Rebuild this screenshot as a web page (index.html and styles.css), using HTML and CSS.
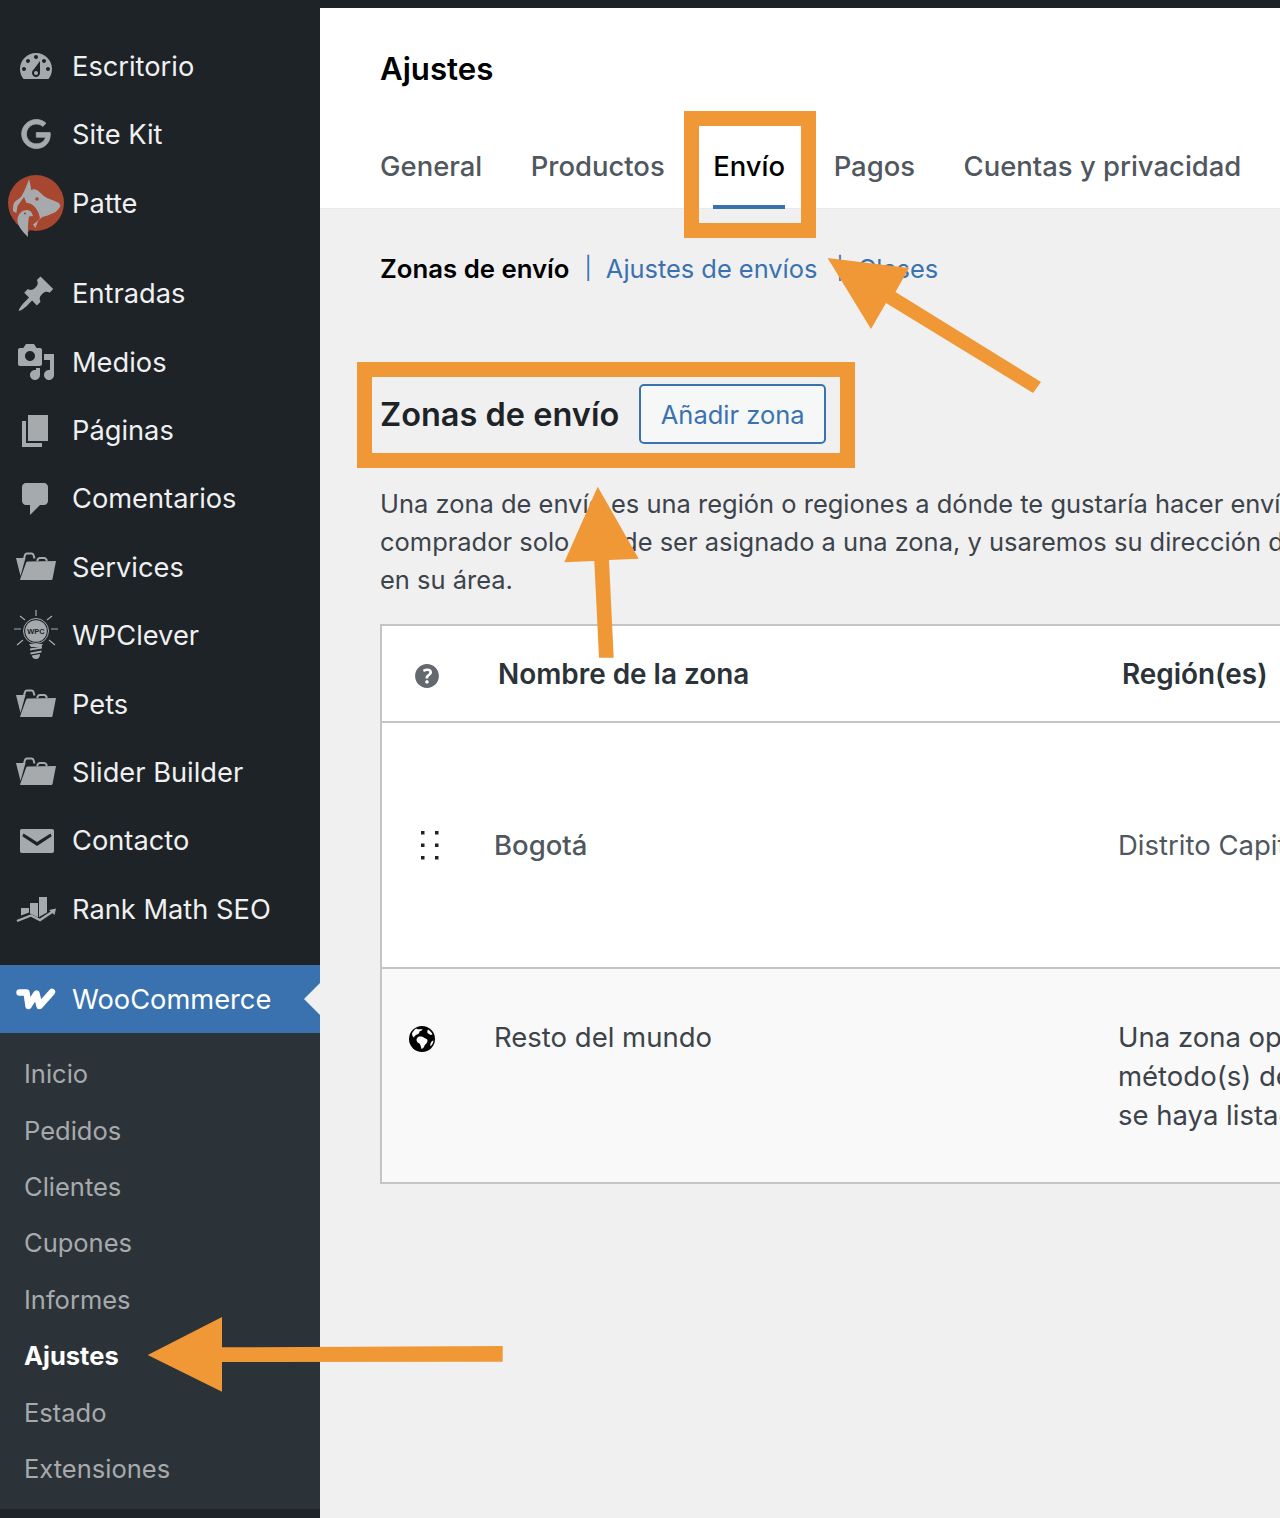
FILE: index.html
```html
<!DOCTYPE html>
<html lang="es">
<head>
<meta charset="utf-8">
<title>Ajustes de envío</title>
<link rel="stylesheet" href="styles.css">
</head>
<body>
<div class="app">
  <nav class="sidebar">
    <ul class="menu">
      <li class="item"><svg class="ico" viewBox="0 0 20 20"><path d="M3.76 16h12.48c1.1-1.37 1.76-3.11 1.76-5 0-4.42-3.58-8-8-8s-8 3.58-8 8c0 1.89.66 3.63 1.76 5zM10 4c.55 0 1 .45 1 1s-.45 1-1 1-1-.45-1-1 .45-1 1-1zM6 6c.55 0 1 .45 1 1s-.45 1-1 1-1-.45-1-1 .45-1 1-1zm8 0c.55 0 1 .45 1 1s-.45 1-1 1-1-.45-1-1 .45-1 1-1zm-5.37 5.55L12 7v6c0 1.1-.9 2-2 2s-2-.9-2-2c0-.57.24-1.08.63-1.45zM4 10c.55 0 1 .45 1 1s-.45 1-1 1-1-.45-1-1 .45-1 1-1zm12 0c.55 0 1 .45 1 1s-.45 1-1 1-1-.45-1-1 .45-1 1-1zm-5 3c0-.55-.45-1-1-1s-1 .45-1 1 .45 1 1 1 1-.45 1-1z" fill-rule="evenodd"/></svg><span>Escritorio</span></li>
      <li class="item"><svg class="ico" viewBox="0 0 40 40"><path class="stroked" d="M20.3 17.6v4.6h9.2c-.4 2.4-2.9 6.6-9.2 6.6-5.5 0-9.9-4.5-9.9-9.9s4.4-9.9 9.9-9.9c3.1 0 5.2 1.3 6.4 2.5l3.3-3.2C27.7 6 24.4 4.5 20.3 4.5 12.2 4.5 5.7 11 5.7 19s6.500 14.500 14.600 14.500c8.400 0 14-5.900 14-14.200 0-.7-.1-1.200-.2-1.700H20.300z"/></svg><span>Site Kit</span></li>
      <li class="item item-avatar"><svg class="avatar" viewBox="0 0 56 62"><circle cx="28" cy="28" r="28" fill="#a8472f"/><path fill="#a7aaad" d="M21 4c1 4 2 8 2 11 2-1 4-1 6 0 3 2 6 6 10 8 4 2 9 3 12 5l1.500 3c-2 3-4 6-7 7-4 2-8 3-11 4l-4 3c-1 2-2 5-3 8l-6-8L8 38l-3-2c0-3 0-6 1-8 2-3 5-4 7-6 3-5 6-12 8-18z"/><path fill="#a8472f" d="M8 40l1.500-9c2-3 4.500-6 6.500-9l2.500 6c2 0 4 .5 6 2 3 2 6 6 7.500 13l-2.500 3-5 4-4 7-13-9z"/><path fill="#a7aaad" d="M9.500 45c0-6 4.500-10 9.500-10 3 0 5 2 6 6l-4 .5c-1 5-1.200 13-1 20.500C14 56 9.500 51 9.500 45z"/><circle cx="29" cy="24" r="1.800" fill="#a8472f"/><circle cx="17" cy="38.500" r="1.100" fill="#a8472f"/></svg><span>Patte</span></li>
      <li class="item item-after-avatar"><svg class="ico" viewBox="0 0 20 20"><path d="M10.440 3.020l1.820-1.820 6.360 6.350-1.830 1.820c-1.050-.68-2.480-.57-3.410.36l-.75.75c-.92.93-1.040 2.350-.35 3.410l-1.830 1.820-2.410-2.410-2.800 2.790c-.42.42-3.380 2.710-3.800 2.290s1.860-3.390 2.280-3.810l2.790-2.790L4.100 9.360l1.830-1.820c1.050.69 2.480.57 3.400-.36l.75-.75c.93-.92 1.050-2.350.36-3.410z"/></svg><span>Entradas</span></li>
      <li class="item"><svg class="ico" viewBox="0 0 20 20"><path fill-rule="evenodd" d="M13 11V4c0-.55-.45-1-1-1h-1.670L9 1H5L3.670 3H2c-.55 0-1 .45-1 1v7c0 .55.45 1 1 1h10c.55 0 1-.45 1-1zM7 4.500c1.380 0 2.500 1.120 2.500 2.500S8.380 9.500 7 9.500 4.500 8.380 4.500 7 5.620 4.500 7 4.500zM14 6h5v10.500c0 1.380-1.120 2.500-2.500 2.500S14 17.880 14 16.500s1.120-2.500 2.500-2.500c.17 0 .34.02.5.05V9h-3V6zm-4 8.050V13h2v3.500c0 1.380-1.120 2.500-2.500 2.500S7 17.880 7 16.500 8.120 14 9.500 14c.17 0 .34.02.5.05z"/></svg><span>Medios</span></li>
      <li class="item"><svg class="ico" viewBox="0 0 20 20"><path d="M6 15V2h10v13H6zm-1 1h8v2H3V5h2v11z"/></svg><span>Páginas</span></li>
      <li class="item"><svg class="ico" viewBox="0 0 20 20"><path d="M5 2h9c1.100 0 2 .9 2 2v7c0 1.100-.9 2-2 2h-2l-5 5v-5H5c-1.100 0-2-.9-2-2V4c0-1.100.9-2 2-2z"/></svg><span>Comentarios</span></li>
      <li class="item"><svg class="ico" viewBox="0 0 40 40"><use href="#folder"/></svg><span>Services</span></li>
      <li class="item"><svg class="ico" viewBox="0 0 40 40"><path class="rays" d="M20 -6v6M4 0l5 4M36 0l-5 4M-2 13h7M35 13h7M1 29l6-5M39 29l-6-5"/><circle cx="20" cy="15" r="12.500" fill="none" stroke="#a7aaad" stroke-width="1"/><circle cx="20" cy="15" r="10.800"/><text x="20" y="18" class="wpc">WPC</text><path d="M13 28h14l-2 3H15zM14 32.500l12-2v2l-12 2zM14.500 36.500l11-2v2l-11 2zM16 39.500l8-1.500c0 3-1.500 5-4 5s-4-1.500-4-3.500z"/></svg><span>WPClever</span></li>
      <li class="item"><svg class="ico" viewBox="0 0 40 40"><use href="#folder"/></svg><span>Pets</span></li>
      <li class="item"><svg class="ico" viewBox="0 0 40 40"><use href="#folder"/></svg><span>Slider Builder</span></li>
      <li class="item"><svg class="ico" viewBox="0 0 40 40"><path fill-rule="evenodd" d="M6 8h30c1.500 0 2 .8 2 2v20c0 1.200-.6 2-2 2H6c-1.400 0-2-.8-2-2V10c0-1.200.5-2 2-2zm1.500 4.500l-1.200 2.800L21 25l14.700-9.700-1.200-2.800L21 21z"/></svg><span>Contacto</span></li>
      <li class="item"><svg class="ico" viewBox="0 0 40 40"><path d="M5 19h8v4.500L5 26.500zM14 14h8v14.500L14 24.500zM23 8h8v15.500L23 28z"/><path class="line" d="M1 32L15 26.500 24 31 36 23"/><path d="M33 21l7-1.500-1.500 6.500z"/></svg><span>Rank Math SEO</span></li>
      <li class="item item-woo"><svg class="ico" viewBox="0 0 40 22"><path class="woo" d="M3.500 4.500H10.500L12.500 18 20.500 5.500 23.500 18 36 4"/></svg><span>WooCommerce</span></li>
    </ul>
    <ul class="submenu">
      <li>Inicio</li>
      <li>Pedidos</li>
      <li>Clientes</li>
      <li>Cupones</li>
      <li>Informes</li>
      <li class="current">Ajustes</li>
      <li>Estado</li>
      <li>Extensiones</li>
    </ul>
  </nav>
  <main class="main">
    <header class="head">
      <h1>Ajustes</h1>
      <div class="tabs">
        <a>General</a>
        <a>Productos</a>
        <a class="active">Envío</a>
        <a>Pagos</a>
        <a>Cuentas y privacidad</a>
      </div>
    </header>
    <div class="body">
      <div class="sublinks"><strong>Zonas de envío</strong><span class="sep">|</span><a>Ajustes de envíos</a><span class="sep">|</span><a>Clases</a></div>
      <div class="title-row">
        <h2>Zonas de envío</h2>
        <button class="btn">Añadir zona</button>
      </div>
      <p class="intro">Una zona de envío es una región o regiones a dónde te gustaría hacer envíos. Un<br>comprador solo puede ser asignado a una zona, y usaremos su dirección de envío<br>en su área.</p>
      <div class="table">
        <div class="row row-head">
          <div class="c1"><svg class="help" viewBox="0 0 20 20"><circle cx="10" cy="10" r="7" fill="#fff"/><path fill-rule="evenodd" d="M17 10c0-3.870-3.140-7-7-7-3.870 0-7 3.130-7 7s3.130 7 7 7c3.860 0 7-3.130 7-7zm-6.300 1.480H9.140v-.43c0-.38.08-.7.24-.98s.46-.57.88-.89c.41-.29.68-.53.81-.71.14-.18.2-.39.2-.62 0-.25-.09-.44-.28-.58-.19-.13-.45-.19-.79-.19-.58 0-1.250.19-2 .57l-.64-1.280c.87-.49 1.800-.74 2.770-.74.81 0 1.450.2 1.920.58.48.39.71.91.71 1.550 0 .43-.09.8-.29 1.110-.19.32-.57.67-1.110 1.060-.38.28-.61.49-.71.63-.1.15-.15.34-.15.57v.35zm-1.470 2.740c-.18-.17-.27-.42-.27-.73 0-.33.08-.58.26-.75s.43-.25.77-.25c.32 0 .57.09.75.26s.27.42.27.74c0 .3-.09.55-.27.72-.18.18-.43.27-.75.27-.33 0-.58-.09-.76-.26z"/></svg></div>
          <div class="c2 th">Nombre de la zona</div>
          <div class="c3 th">Región(es)</div>
        </div>
        <div class="row row-bogota">
          <div class="c1"><svg class="drag" viewBox="0 0 18 30"><rect x="0" y="0" width="3.500" height="3.500"/><rect x="14" y="0" width="3.500" height="3.500"/><rect x="0" y="12.500" width="3.500" height="3.500"/><rect x="14" y="12.500" width="3.500" height="3.500"/><rect x="0" y="25" width="3.500" height="3.500"/><rect x="14" y="25" width="3.500" height="3.500"/></svg></div>
          <div class="c2 zone zone-name">Bogotá</div>
          <div class="c3 zone">Distrito Capital</div>
        </div>
        <div class="row row-world">
          <div class="c1"><svg class="globe" viewBox="0 0 26 26"><circle cx="13" cy="13" r="13" fill="#000"/><path fill="#f9f9f9" d="M7 2.500c2 1 4.500 1 6.500.5-.5 1.500-1.500 2-3 2.500 0 1.500-1 2.500-2.500 3-1.500.5-2.500 1.500-3 3-1.500-1-2-2.500-2-4 1-2 2.300-3.800 4-5zM19 3.500c2 1.200 3.800 3 4.500 5l-2 .5c-1-.5-2-1.500-3-2-.5-1.500 0-2.500.5-3.500zM9 11c2-.8 4.500-.5 6.500 1 1.500.5 3 1 3 2.500 0 2-1.500 3.500-3 5-.3 2-1.500 3-3 3.500-.5-2-1-4-2-5.500-1.500-.5-3-2-3-3.500 0-1.200.5-2 1.500-3zM23 15l1.500-.5c-.3 2.500-1.500 4.500-3 6-.5-2 0-4 1.500-5.500z"/></svg></div>
          <div class="c2 zone">Resto del mundo</div>
          <div class="c3 zone">Una zona opcional que puedes usar para configurar<br>método(s) de envío a los clientes que no estén en<br>se haya listado</div>
        </div>
      </div>
    </div>
  </main>
</div>
<svg class="notes" viewBox="0 0 1280 1518" aria-hidden="true">
  <path fill-rule="evenodd" d="M684 111h132v127H684zM699 126v97h102v-97zM357 362h498v106H357zM372 377v76h468v-76z"/>
  <polygon points="827.600,258 909,268 895.500,292 1041,382 1033,393 886,303 871,329"/>
  <polygon points="597.700,486.700 638.700,558.700 609,560 613.700,657.700 599,657.700 594.300,561 564.300,562.300"/>
  <polygon points="147.700,1355 222,1317 222,1347.300 502.700,1346 502.700,1361.700 222,1362 222,1391.700"/>
</svg>
<svg class="defs" width="0" height="0" aria-hidden="true"><defs><g id="folder"><path d="M0 11H9.500L4.500 29z"/><path d="M12 14.500L40 14l-3.500 18c-.2.7-.8 1-1.500 1H5c-.8 0-1-.5-.8-1L10 16c.3-1 1-1.500 2-1.500z"/><path class="handle" d="M8 11.500l1-3.500c.3-1 1-1.500 2-1.500h4.500c1 0 1.700.5 2 1.500l1 3.500M21 14l1-2c.3-.6 1-1 1.700-1h4.600c.7 0 1.400.4 1.700 1l1 2"/></g></defs></svg>
</body>
</html>
```
FILE: styles.css
```css
* { box-sizing: border-box; }
html, body { margin: 0; padding: 0; }
body {
  width: 1280px;
  height: 1518px;
  overflow: hidden;
  position: relative;
  background: #f0f0f1;
  font-family: Inter, "Liberation Sans", sans-serif;
  color: #3c434a;
}
ul { list-style: none; margin: 0; padding: 0; }
h1, h2, p { margin: 0; }

.app {
  display: grid;
  grid-template-columns: 320px 960px;
  height: 1518px;
  padding-top: 8px;
  background: #1d2327;
}

/* sidebar */
.sidebar { background: #1d2327; padding-top: 24.4px; }
.item {
  display: flex;
  align-items: center;
  height: 68.4px;
  padding-left: 16px;
  gap: 16px;
  font-size: 27.25px;
  color: #f0f0f1;
  position: relative;
}
.ico { width: 40px; height: 40px; fill: #a7aaad; flex: none; overflow: visible; }
.stroked { stroke: #a7aaad; stroke-width: .8; }
.rays { fill: none; stroke: #a7aaad; stroke-width: 1.2; }
.wpc { font: 700 7.5px "Liberation Sans", sans-serif; fill: #1d2327; text-anchor: middle; }
.line { fill: none; stroke: #a7aaad; stroke-width: 2.4; }
.handle { fill: none; stroke: #a7aaad; stroke-width: 2; }
.avatar { width: 56px; height: 62px; margin-left: -8px; margin-right: -8px; flex: none; transform: translateY(3px); }
.item-after-avatar { margin-top: 22px; }
.item-woo {
  height: 68px;
  margin-top: 21.2px;
  padding-top: 1px;
  background: #3a72af;
  color: #fff;
}
.item-woo .ico { height: 22px; }
.woo { fill: none; stroke: #fff; stroke-width: 6.4; stroke-linecap: round; stroke-linejoin: round; }
.item-woo::after {
  content: "";
  position: absolute;
  right: 0;
  top: 18px;
  border: 16px solid transparent;
  border-right-color: #f0f0f1;
  border-left-width: 0;
}
.submenu {
  background: #2c3338;
  padding: 13.5px 0 11.5px;
  height: 476px;
}
.submenu li {
  height: 56.4px;
  line-height: 56.4px;
  padding-left: 24px;
  font-size: 25.5px;
  color: #a7aaad;
}
.submenu .current { color: #fff; font-weight: 700; }

/* main */
.main { background: #f0f0f1; overflow: hidden; }
.head {
  height: 201px;
  background: #fff;
  border-bottom: 1px solid #e9e9ea;
  padding: 41px 0 0 60px;
}
h1 { font-size: 31.2px; font-weight: 600; line-height: 40px; color: #000; }
.tabs { display: flex; gap: 48.5px; margin-top: 57px; font-size: 27.45px; font-weight: 500; line-height: 40px; color: #50575e; white-space: nowrap; }
.tabs a { display: block; height: 63px; }
.tabs .active { color: #000; border-bottom: 4px solid #3a72af; }

.body { padding: 39px 0 0 60px; white-space: nowrap; }
.sublinks { display: flex; align-items: center; height: 40px; font-size: 25.4px; color: #3a72af; }
.sublinks strong { font-weight: 600; font-size: 25.75px; color: #000; }
.sublinks .sep { margin: 0 14px 0 15px; font-size: 22px; }
.sublinks a + .sep { margin-left: 19px; }
.title-row { display: flex; align-items: center; gap: 20px; margin-top: 96px; height: 60px; }
h2 { font-size: 32.5px; font-weight: 600; color: #1d2327; }
.btn {
  width: 187px;
  height: 60px;
  font: 400 25.5px Inter, "Liberation Sans", sans-serif;
  color: #3a72af;
  background: #f6f7f7;
  border: 2px solid #3a72af;
  border-radius: 5px;
  padding: 0;
}
.intro { margin-top: 41px; font-size: 25.47px; line-height: 38px; color: #3c434a; }
.table {
  margin-top: 25px;
  width: 1100px;
  background: #fff;
  border: 2px solid #c3c4c7;
}
.row { display: grid; grid-template-columns: 112px 624px 1fr; }
.row-head { height: 97px; align-items: center; border-bottom: 2px solid #c3c4c7; }
.row-bogota { height: 246px; align-items: center; border-bottom: 2px solid #c3c4c7; }
.row-world { height: 213px; background: #f9f9f9; padding-top: 49px; line-height: 39px; }
.c1 { display: flex; }
.th { font-size: 27.9px; font-weight: 600; color: #2c3338; padding-left: 4px; }
.zone { font-size: 27.5px; color: #50575e; }
.zone-name { font-weight: 500; }
.row-world .zone { color: #3c434a; }
.help { width: 34px; height: 34px; margin: 5px 0 0 28px; fill: #646970; }
.drag { width: 18px; height: 30px; margin: 2px 0 0 39px; fill: #1d2327; }
.globe { width: 26px; height: 26px; margin: 8px 0 0 27px; }

/* annotations */
.notes { position: absolute; left: 0; top: 0; width: 1280px; height: 1518px; fill: #f19836; pointer-events: none; }
.defs { position: absolute; }
```
